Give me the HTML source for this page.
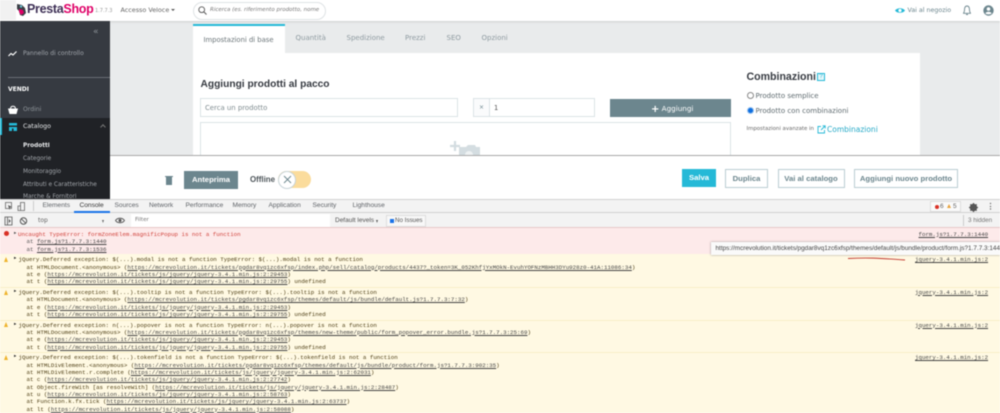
<!DOCTYPE html>
<html><head><meta charset="utf-8">
<style>
html,body{margin:0;padding:0;background:#fff}
#p{position:relative;width:1000px;height:413px;overflow:hidden;background:#fff;font-family:"Liberation Sans",sans-serif;filter:blur(.4px)}
.a{position:absolute}
.t{position:absolute;white-space:nowrap;line-height:1}
.s{font-family:"DejaVu Sans",sans-serif}
.m{position:absolute;white-space:nowrap;font-family:"Liberation Mono",monospace;font-size:5.8px;line-height:7px;color:#333}
.m u{color:#444}
.w{color:#4a3a10}
.tab{font-size:6.6px;color:#5f6368;top:203px}
.nav{font-size:7px;color:#8e9aa0;top:35px}
.btn{position:absolute;box-sizing:border-box;border:1px solid #bbcdd2;background:#fff;color:#6c868e;font-size:7.7px;font-weight:bold;text-align:center;top:168.500px;height:19px;line-height:17px;white-space:nowrap;font-family:"Liberation Sans",sans-serif}
</style></head><body>
<div id="p">
<!-- page bg -->
<div class="a" style="left:110px;top:21px;width:890px;height:135px;background:#e9ebec"></div>
<!-- header -->
<div class="a" style="left:0;top:0;width:1000px;height:21px;background:#fff;box-shadow:0 1px 2px rgba(0,0,0,.12)"></div>
<div class="a" style="left:0;top:0;width:16px;height:20px;background:#f1f1f1"></div>
<svg class="a" style="left:15px;top:3px" width="12" height="14" viewBox="0 0 12 14"><path d="M2 1l5 1 3 3 1 5-3 3-3-1-1-4-2-2z" fill="#3c3f45"/><path d="M4 6l4 1 1 3-3 2-2-3z" fill="#df0067"/><circle cx="6" cy="3.500" r="1.200" fill="#6ec3d6"/></svg>
<div class="t" style="left:27px;top:3px;font-size:12.500px;font-weight:bold;letter-spacing:-.3px;color:#3d2f55">Presta<span style="color:#df0067">Shop</span></div>
<div class="t s" style="left:95px;top:9px;font-size:5px;color:#999">1.7.7.3</div>
<div class="t s" style="left:120.500px;top:7px;font-size:6.400px;color:#666">Accesso Veloce <span style="display:inline-block;border:2px solid transparent;border-top:2.500px solid #555;border-bottom:0;vertical-align:1px"></span></div>
<div class="a" style="left:193px;top:2px;width:133px;height:18px;box-sizing:border-box;border:1px solid #dfe3e5;border-radius:9px"></div>
<svg class="a" style="left:198px;top:6px" width="9" height="9" viewBox="0 0 9 9"><circle cx="3.700" cy="3.700" r="2.900" fill="none" stroke="#555" stroke-width=".9"/><path d="M6 6l2.500 2.500" stroke="#555" stroke-width="1"/></svg>
<div class="t s" style="left:210px;top:7.500px;font-size:5.500px;font-style:italic;color:#777">Ricerca (es. riferimento prodotto, nome</div>
<svg class="a" style="left:895px;top:7px" width="10" height="7" viewBox="0 0 10 7"><path d="M0 3.500C2 .5 8 .5 10 3.500 8 6.500 2 6.500 0 3.500z" fill="#25b9d7"/><circle cx="5" cy="3.500" r="1.600" fill="#fff"/></svg>
<div class="t s" style="left:907.500px;top:8px;font-size:6.300px;color:#6c868e">Vai al negozio</div>
<svg class="a" style="left:962px;top:5px" width="10" height="11" viewBox="0 0 10 11"><path d="M5 1C3 1 2.500 3 2.500 5S1.500 8 1.500 8.300h7C8.500 8 7.500 7 7.500 5S7 1 5 1z" fill="none" stroke="#6c868e" stroke-width=".9"/><path d="M4 9.500h2" stroke="#6c868e"/></svg>
<svg class="a" style="left:983px;top:5px" width="11" height="11" viewBox="0 0 11 11"><circle cx="5.500" cy="5.500" r="5.200" fill="#6c868e"/><circle cx="5.500" cy="4" r="1.800" fill="#fff"/><path d="M2.300 8.300c1.500-2 5-2 6.400 0-1.500 1.500-5 1.500-6.400 0z" fill="#fff"/></svg>

<!-- sidebar -->
<div class="a" style="left:0;top:21px;width:110px;height:97px;background:#363a41"></div>
<div class="a" style="left:0;top:118px;width:110px;height:81px;background:#202226"></div>
<div class="a" style="left:0;top:118px;width:2px;height:17px;background:#25b9d7"></div>
<div class="a" style="left:8px;top:77px;width:102px;height:1px;background:#6a6e74"></div>
<div class="t s" style="left:93px;top:28px;font-size:9px;color:#8a9095">«</div>
<svg class="a" style="left:8px;top:50px" width="10" height="7" viewBox="0 0 10 7"><path d="M.5 6l2.500-2.500 2 1.500 3.500-3.500" fill="none" stroke="#fff" stroke-width="1.200"/></svg>
<div class="t s" style="left:23px;top:51px;font-size:6px;color:#a0a5ab">Pannello di controllo</div>
<div class="t s" style="left:8px;top:87px;font-size:6px;font-weight:bold;color:#fff">VENDI</div>
<svg class="a" style="left:8px;top:105px" width="10" height="9" viewBox="0 0 10 9"><path d="M0 3.500h10L8.500 9h-7z" fill="#fff"/><path d="M2.500 3.500C3 .5 7 .5 7.500 3.500" fill="none" stroke="#fff"/></svg>
<div class="t s" style="left:23px;top:107px;font-size:6.100px;color:#8f959a">Ordini</div>
<svg class="a" style="left:8px;top:122px" width="10" height="10" viewBox="0 0 10 10"><path d="M1 1h8v2.500H1zM1 5h8v4H5.500V6.500H4V9H1z" fill="#25b9d7"/></svg>
<div class="t s" style="left:23px;top:124px;font-size:6.300px;color:#e6e8ea">Catalogo</div>
<div class="a" style="left:101px;top:125px;width:3px;height:3px;border-left:1px solid #777;border-top:1px solid #777;transform:rotate(45deg)"></div>
<div class="t s" style="left:23px;top:144px;font-size:5.800px;font-weight:bold;color:#e6e8ea">Prodotti</div>
<div class="t s" style="left:23px;top:157px;font-size:5.800px;color:#a2a6ab">Categorie</div>
<div class="t s" style="left:23px;top:169.500px;font-size:5.800px;color:#a2a6ab">Monitoraggio</div>
<div class="t s" style="left:23px;top:182.500px;font-size:5.800px;color:#a2a6ab">Attributi e Caratteristiche</div>
<div class="t s" style="left:23px;top:195px;font-size:5.800px;color:#a2a6ab">Marche &amp; Fornitori</div>

<!-- tabs -->
<div class="a" style="left:193px;top:25px;width:92px;height:28px;background:#fff;border-top:0"></div>
<div class="a" style="left:193px;top:24px;width:92px;height:2px;background:#25b9d7"></div>
<div class="t s" style="left:203.500px;top:36.500px;font-size:6.800px;color:#6a7478">Impostazioni di base</div>
<div class="t s nav" style="left:295.500px">Quantità</div>
<div class="t s nav" style="left:346.500px">Spedizione</div>
<div class="t s nav" style="left:405px">Prezzi</div>
<div class="t s nav" style="left:446.500px">SEO</div>
<div class="t s nav" style="left:481.500px">Opzioni</div>
<!-- panel -->
<div class="a" style="left:193px;top:53px;width:727px;height:103px;background:#fff"></div>
<div class="t" style="left:200.500px;top:79.500px;font-size:10.200px;font-weight:bold;color:#363a41">Aggiungi prodotti al pacco</div>
<div class="a" style="left:200px;top:98px;width:258px;height:19px;box-sizing:border-box;border:1px solid #dbe3e6"></div>
<div class="t s" style="left:205px;top:105px;font-size:6.900px;color:#7f8c90">Cerca un prodotto</div>
<div class="a" style="left:473px;top:98px;width:122px;height:19px;box-sizing:border-box;border:1px solid #dbe3e6"></div>
<div class="a" style="left:473px;top:98px;width:17px;height:19px;box-sizing:border-box;border:1px solid #dbe3e6;background:#fafbfc"></div>
<div class="t s" style="left:479px;top:105px;font-size:6px;color:#6c868e">×</div>
<div class="t s" style="left:494px;top:105px;font-size:6.700px;color:#555">1</div>
<div class="a" style="left:610px;top:98.500px;width:121px;height:18.500px;background:#6c868e"></div>
<div class="t s" style="left:651px;top:104.500px;font-size:7.200px;color:#fff"><span style="font-size:10px;vertical-align:-1px;font-weight:bold;line-height:1">+</span>&nbsp;Aggiungi</div>
<div class="a" style="left:200px;top:122px;width:531px;height:36px;box-sizing:border-box;border:1px solid #dbe3e6"></div>
<svg class="a" style="left:450px;top:141px" width="30" height="15" viewBox="0 0 30 15"><path d="M5 0v10M0 5h10" stroke="#d3dce0" stroke-width="2.200"/><path d="M9 6h7l2-2h7l1 2h4v9H9z" fill="#d4dde1"/><circle cx="19" cy="14" r="4" fill="#eef2f3"/></svg>
<div class="t" style="left:746.500px;top:71.500px;font-size:10.600px;font-weight:bold;color:#363a41">Combinazioni</div>
<div class="a" style="left:817px;top:73px;width:8px;height:8px;box-sizing:border-box;border:1px solid #25b9d7;color:#25b9d7;font-size:6px;line-height:6px;text-align:center;background:#e5f6fa">?</div>
<div class="a" style="left:747px;top:92px;width:7px;height:7px;box-sizing:border-box;border:1px solid #888;border-radius:50%;background:#fff"></div>
<div class="t s" style="left:755.500px;top:92.500px;font-size:7px;color:#5f6b70">Prodotto semplice</div>
<div class="a" style="left:747px;top:107px;width:7px;height:7px;border-radius:50%;background:#0f6fe0;box-sizing:border-box;border:1px solid #9cc4ef"></div>
<div class="t s" style="left:755.500px;top:108px;font-size:7px;color:#5f6b70">Prodotto con combinazioni</div>
<div class="t s" style="left:746.500px;top:127px;font-size:5.400px;color:#666">Impostazioni avanzate in</div>
<svg class="a" style="left:817px;top:125px" width="9" height="9" viewBox="0 0 9 9"><path d="M7.500 5v3H1V1.500h3M4 5l4-4M5.500 .8h2.700v2.700" fill="none" stroke="#25b9d7" stroke-width=".9"/></svg>
<div class="t s" style="left:827px;top:126px;font-size:7.500px;color:#25a9c7">Combinazioni</div>

<!-- sticky footer -->
<div class="a" style="left:110px;top:154.500px;width:890px;height:1.500px;background:#a8a8a8"></div>
<div class="a" style="left:110px;top:156px;width:890px;height:43px;background:#fff"></div>
<svg class="a" style="left:165px;top:175px" width="8" height="10" viewBox="0 0 8 10"><path d="M1 2h6v8H1z" fill="#6c868e"/><path d="M0 1h8v1H0z" fill="#6c868e"/></svg>
<div class="a" style="left:184px;top:171px;width:54px;height:18px;background:#6c868e"></div>
<div class="t" style="left:192px;top:176px;font-size:7.700px;font-weight:bold;color:#fff">Anteprima</div>
<div class="t" style="left:250px;top:175.500px;font-size:7.900px;font-weight:bold;color:#4d555a">Offline</div>
<div class="a" style="left:278px;top:171px;width:33px;height:17px;border-radius:9px;background:#fbdc9c"></div>
<div class="a" style="left:278px;top:170.500px;width:18px;height:18px;box-sizing:border-box;border-radius:50%;background:#fff;border:1px solid #c8d4d8"></div>
<svg class="a" style="left:282.500px;top:175px" width="9" height="9" viewBox="0 0 9 9"><path d="M1 1l7 7M8 1l-7 7" stroke="#6c868e" stroke-width=".9"/></svg>
<div class="a" style="left:682px;top:169px;width:34px;height:18px;background:#25b9d7;color:#fff;font-size:7.700px;font-weight:bold;text-align:center;line-height:18px">Salva</div>
<div class="btn" style="left:725px;width:43px">Duplica</div>
<div class="btn" style="left:777.500px;width:67px">Vai al catalogo</div>
<div class="btn" style="left:854px;width:104px">Aggiungi nuovo prodotto</div>

<!-- devtools toolbar -->
<div class="a" style="left:0;top:199px;width:1000px;height:14px;background:#f3f3f3;border-top:1px solid #d0d0d0;border-bottom:1px solid #d0d0d0;box-sizing:border-box"></div>
<div class="a" style="left:0;top:213px;width:1000px;height:15px;background:#f3f3f3;border-bottom:1px solid #e8c8c8;box-sizing:border-box"></div>
<svg class="a" style="left:5px;top:202px" width="24" height="9" viewBox="0 0 24 9"><path d="M.5.5h6v6h-6z" fill="none" stroke="#666" stroke-width=".8"/><path d="M3 3l4 2-2 .5L4.500 8z" fill="#555"/><path d="M15.500.5h4v8h-4zM13 4h2.500v4.500H13z" fill="none" stroke="#666" stroke-width=".8"/></svg>
<div class="a" style="left:33px;top:201px;width:1px;height:10px;background:#ccc"></div>
<div class="t tab" style="left:42.500px">Elements</div>
<div class="t tab" style="left:79.500px;color:#333">Console</div>
<div class="a" style="left:74px;top:211px;width:36px;height:2px;background:#1a73e8"></div>
<div class="t tab" style="left:114.500px">Sources</div>
<div class="t tab" style="left:149px">Network</div>
<div class="t tab" style="left:185.500px">Performance</div>
<div class="t tab" style="left:232.500px">Memory</div>
<div class="t tab" style="left:268.500px">Application</div>
<div class="t tab" style="left:312.500px">Security</div>
<div class="t tab" style="left:352.500px">Lighthouse</div>
<div class="a" style="left:930px;top:201px;width:31px;height:11px;box-sizing:border-box;border:1px solid #ddd;background:#fafafa"></div>
<div class="a" style="left:934.500px;top:205px;width:4px;height:4px;border-radius:50%;background:#d93025"></div>
<div class="t" style="left:940px;top:203.500px;font-size:6.500px;color:#666">6</div>
<div class="a" style="left:947px;top:204px;width:0;height:0;border:2.500px solid transparent;border-bottom:4.500px solid #e8a33d;border-top:0"></div>
<div class="t" style="left:953px;top:203.500px;font-size:6.500px;color:#666">5</div>
<svg class="a" style="left:969px;top:202.500px" width="9" height="9" viewBox="0 0 9 9"><circle cx="4.500" cy="4.500" r="2.700" fill="none" stroke="#555" stroke-width="2"/><path d="M4.500 0v9M0 4.500h9M1.300 1.300l6.400 6.400M7.700 1.300L1.300 7.700" stroke="#555" stroke-width="1.200"/></svg>
<div class="t" style="left:986.500px;top:202.500px;font-size:8px;color:#666;font-weight:bold">⋮</div>

<!-- second toolbar -->
<svg class="a" style="left:4px;top:215.500px" width="28" height="10" viewBox="0 0 28 10"><path d="M1 1h7v8H1zM3.500 1v8" fill="none" stroke="#555" stroke-width=".8"/><path d="M4.800 3l2 2-2 2z" fill="#555"/><circle cx="19.500" cy="5" r="3.200" fill="none" stroke="#555" stroke-width="1"/><path d="M17.300 2.800l4.400 4.400" stroke="#555"/></svg>
<div class="t s" style="left:38px;top:218px;font-size:6px;color:#666">top</div>
<div class="a" style="left:102px;top:219.500px;width:0;height:0;border:1.700px solid transparent;border-top:3px solid #666;border-bottom:0"></div>
<svg class="a" style="left:115px;top:217px" width="10" height="7" viewBox="0 0 10 7"><path d="M.5 3.500C2.500.5 7.500.5 9.500 3.500 7.500 6.500 2.500 6.500.5 3.500z" fill="none" stroke="#555" stroke-width=".9"/><circle cx="5" cy="3.500" r="1.500" fill="#555"/></svg>
<div class="a" style="left:131px;top:214px;width:199px;height:13px;background:#fff"></div>
<div class="t s" style="left:135px;top:218px;font-size:5.600px;color:#777">Filter</div>
<div class="t" style="left:335px;top:218px;font-size:6.500px;color:#555">Default levels</div>
<div class="a" style="left:375.500px;top:219.500px;width:0;height:0;border:1.700px solid transparent;border-top:3px solid #555;border-bottom:0"></div>
<div class="a" style="left:386px;top:214.500px;width:40px;height:12px;box-sizing:border-box;border:1px solid #ddd;background:#f8f8f8"></div>
<div class="a" style="left:390px;top:219px;width:3.500px;height:3.500px;background:#1a73e8"></div>
<div class="t" style="left:395px;top:218px;font-size:6.200px;color:#555">No Issues</div>
<div class="a" style="left:963px;top:215px;width:1px;height:11px;background:#ccc"></div>
<div class="t" style="left:968px;top:218px;font-size:6.300px;color:#777">3 hidden</div>

<!-- console -->
<div class="a" style="left:0;top:228px;width:1000px;height:26px;background:#fdeaea"></div>
<div class="a" style="left:0;top:254px;width:1000px;height:159px;background:#fff9e3"></div>
<div class="a" style="left:0;top:286.500px;width:1000px;height:1px;background:#f8efc8"></div>
<div class="a" style="left:0;top:319.500px;width:1000px;height:1px;background:#f8efc8"></div>
<div class="a" style="left:0;top:352px;width:1000px;height:1px;background:#f8efc8"></div>

<div class="a" style="left:4px;top:231px;width:5px;height:5px;border-radius:50%;background:#d93025"></div>
<div class="m" style="left:14px;top:230.500px;font-size:4px;color:#555">▶</div>
<div class="m" style="left:18px;top:230.500px;color:#d0413a">Uncaught TypeError: formZoneElem.magnificPopup is not a function</div>
<div class="m" style="left:26.500px;top:238px;color:#555">at <u>form.js?1.7.7.3:1440</u></div>
<div class="m" style="left:26.500px;top:245.500px;color:#555">at <u>form.js?1.7.7.3:1536</u></div>
<div class="m" style="left:918.500px;top:230.500px"><u>form.js?1.7.7.3:1440</u></div>

<div class="a tri" style="left:3.500px;top:256.500px;width:0;height:0;border:2.700px solid transparent;border-bottom:5px solid #eeb32b;border-top:0"></div>
<div class="m" style="left:14px;top:256px;font-size:4px">▶</div>
<div class="m w" style="left:18.500px;top:256px">jQuery.Deferred exception: $(...).modal is not a function TypeError: $(...).modal is not a function</div>
<div class="m w" style="left:26.500px;top:263.500px">at HTMLDocument.&lt;anonymous&gt; (<u>https://mcrevolution.it/tickets/pgdar8vq1zc6xfsp/index.php/sell/catalog/products/4437?_token=3K_052KhfjYxMOkN-EvuhYOFNzMBHH3DYu928z0-41A:11086:34</u>)</div>
<div class="m w" style="left:26.500px;top:271px">at e (<u>https://mcrevolution.it/tickets/js/jquery/jquery-3.4.1.min.js:2:29453</u>)</div>
<div class="m w" style="left:26.500px;top:278px">at t (<u>https://mcrevolution.it/tickets/js/jquery/jquery-3.4.1.min.js:2:29755</u>) undefined</div>
<div class="m" style="left:915px;top:256px"><u>jquery-3.4.1.min.js:2</u></div>

<div class="a" style="left:3.500px;top:289.500px;width:0;height:0;border:2.700px solid transparent;border-bottom:5px solid #eeb32b;border-top:0"></div>
<div class="m" style="left:14px;top:289px;font-size:4px">▶</div>
<div class="m w" style="left:18.500px;top:288.500px">jQuery.Deferred exception: $(...).tooltip is not a function TypeError: $(...).tooltip is not a function</div>
<div class="m w" style="left:26.500px;top:296px">at HTMLDocument.&lt;anonymous&gt; (<u>https://mcrevolution.it/tickets/pgdar8vq1zc6xfsp/themes/default/js/bundle/default.js?1.7.7.3:7:32</u>)</div>
<div class="m w" style="left:26.500px;top:303.500px">at e (<u>https://mcrevolution.it/tickets/js/jquery/jquery-3.4.1.min.js:2:29453</u>)</div>
<div class="m w" style="left:26.500px;top:311px">at t (<u>https://mcrevolution.it/tickets/js/jquery/jquery-3.4.1.min.js:2:29755</u>) undefined</div>
<div class="m" style="left:915px;top:288.500px"><u>jquery-3.4.1.min.js:2</u></div>

<div class="a" style="left:3.500px;top:322px;width:0;height:0;border:2.700px solid transparent;border-bottom:5px solid #eeb32b;border-top:0"></div>
<div class="m" style="left:14px;top:321.500px;font-size:4px">▶</div>
<div class="m w" style="left:18.500px;top:321.500px">jQuery.Deferred exception: n(...).popover is not a function TypeError: n(...).popover is not a function</div>
<div class="m w" style="left:26.500px;top:328.500px">at HTMLDocument.&lt;anonymous&gt; (<u>https://mcrevolution.it/tickets/pgdar8vq1zc6xfsp/themes/new-theme/public/form_popover_error.bundle.js?1.7.7.3:25:69</u>)</div>
<div class="m w" style="left:26.500px;top:336px">at e (<u>https://mcrevolution.it/tickets/js/jquery/jquery-3.4.1.min.js:2:29453</u>)</div>
<div class="m w" style="left:26.500px;top:343.500px">at t (<u>https://mcrevolution.it/tickets/js/jquery/jquery-3.4.1.min.js:2:29755</u>) undefined</div>
<div class="m" style="left:915px;top:321.500px"><u>jquery-3.4.1.min.js:2</u></div>

<div class="a" style="left:3.500px;top:355px;width:0;height:0;border:2.700px solid transparent;border-bottom:5px solid #eeb32b;border-top:0"></div>
<div class="m" style="left:14px;top:354px;font-size:4px">▶</div>
<div class="m w" style="left:18.500px;top:354px">jQuery.Deferred exception: $(...).tokenfield is not a function TypeError: $(...).tokenfield is not a function</div>
<div class="m w" style="left:26.500px;top:361.500px">at HTMLDivElement.&lt;anonymous&gt; (<u>https://mcrevolution.it/tickets/pgdar8vq1zc6xfsp/themes/default/js/bundle/product/form.js?1.7.7.3:902:35</u>)</div>
<div class="m w" style="left:26.500px;top:368.500px">at HTMLDivElement.r.complete (<u>https://mcrevolution.it/tickets/js/jquery/jquery-3.4.1.min.js:2:62031</u>)</div>
<div class="m w" style="left:26.500px;top:376px">at c (<u>https://mcrevolution.it/tickets/js/jquery/jquery-3.4.1.min.js:2:27742</u>)</div>
<div class="m w" style="left:26.500px;top:383.500px">at Object.fireWith [as resolveWith] (<u>https://mcrevolution.it/tickets/js/jquery/jquery-3.4.1.min.js:2:28487</u>)</div>
<div class="m w" style="left:26.500px;top:391px">at u (<u>https://mcrevolution.it/tickets/js/jquery/jquery-3.4.1.min.js:2:58763</u>)</div>
<div class="m w" style="left:26.500px;top:398px">at Function.k.fx.tick (<u>https://mcrevolution.it/tickets/js/jquery/jquery-3.4.1.min.js:2:63737</u>)</div>
<div class="m w" style="left:26.500px;top:405.500px">at lt (<u>https://mcrevolution.it/tickets/js/jquery/jquery-3.4.1.min.js:2:58088</u>)</div>
<div class="m" style="left:915px;top:354px"><u>jquery-3.4.1.min.js:2</u></div>

<!-- tooltip -->
<div class="a" style="left:711px;top:242px;width:289px;height:13px;background:#fafafa;box-shadow:0 0 2px rgba(0,0,0,.4)"></div>
<div class="t" style="left:715.500px;top:245.500px;font-size:6.400px;color:#444">https://mcrevolution.it/tickets/pgdar8vq1zc6xfsp/themes/default/js/bundle/product/form.js?1.7.7.3:1440</div>
<svg class="a" style="left:847px;top:257px" width="60" height="5" viewBox="0 0 60 5"><path d="M1 1.500C20 .5 30 1 58 3" fill="none" stroke="#c2392f" stroke-width=".9"/></svg>
</div>
</body></html>
